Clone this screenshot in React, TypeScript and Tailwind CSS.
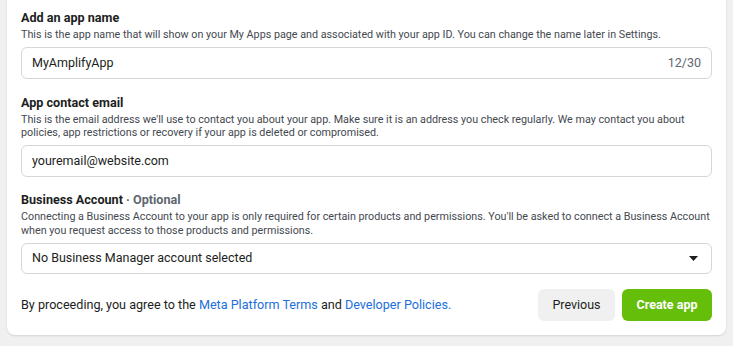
import { useState } from "react";

function FieldLabel({ title, optional }: { title: string; optional?: boolean }) {
  return (
    <div className="text-[12.6px] leading-[16px] font-bold text-[#1c1e21]">
      {title}
      {optional && <span className="text-[#606770]"> · Optional</span>}
    </div>
  );
}

export default function App() {
  const [appName, setAppName] = useState("MyAmplifyApp");
  const [email, setEmail] = useState("youremail@website.com");

  return (
    <div
      className="min-h-[346px] bg-[#f0f0f0] px-[7px] pb-[11px]"
      style={{ fontFamily: "Roboto, 'Liberation Sans', sans-serif" }}
    >
      <div className="bg-white rounded-b-[8px] shadow-[0_1px_2px_rgba(0,0,0,0.12)] px-[14px] pt-[10px] pb-[14px]">
        {/* App name */}
        <FieldLabel title="Add an app name" />
        <p className="mt-[2px] text-[10.75px] leading-[13px] text-[#444950]">
          This is the app name that will show on your My Apps page and associated with your app ID. You can change the name later in Settings.
        </p>
        <div className="mt-[6px] flex items-center h-[32px] border border-[#d3d6da] rounded-[6px] px-[10px]">
          <input
            value={appName}
            maxLength={30}
            onChange={(e) => setAppName(e.target.value)}
            className="flex-1 outline-none text-[12.5px] text-[#1c1e21] bg-transparent"
          />
          <span className="text-[12.5px] text-[#606770]">{appName.length}/30</span>
        </div>

        {/* Contact email */}
        <div className="mt-[16px]">
          <FieldLabel title="App contact email" />
        </div>
        <p className="mt-[2px] text-[10.75px] leading-[13px] text-[#444950]">
          This is the email address we'll use to contact you about your app. Make sure it is an address you check regularly. We may contact you about policies, app restrictions or recovery if your app is deleted or compromised.
        </p>
        <div className="mt-[6px] flex items-center h-[32px] border border-[#d3d6da] rounded-[6px] px-[10px]">
          <input
            value={email}
            onChange={(e) => setEmail(e.target.value)}
            className="flex-1 outline-none text-[12.5px] text-[#1c1e21] bg-transparent"
          />
        </div>

        {/* Business account */}
        <div className="mt-[15px]">
          <FieldLabel title="Business Account" optional />
        </div>
        <p className="mt-[2px] text-[10.75px] leading-[14px] text-[#444950]">
          Connecting a Business Account to your app is only required for certain products and permissions. You'll be asked to connect a Business Account when you request access to those products and permissions.
        </p>
        <button className="mt-[5px] w-full flex items-center justify-between h-[31px] border border-[#d3d6da] rounded-[6px] pl-[10px] pr-[13px] text-left">
          <span className="text-[12.5px] text-[#1c1e21]">No Business Manager account selected</span>
          <svg width="9" height="5" viewBox="0 0 9 5">
            <path d="M0 0h9L4.5 5z" fill="#1c1e21" />
          </svg>
        </button>

        {/* Footer */}
        <div className="mt-[15px] flex items-center justify-between">
          <p className="text-[12.6px] text-[#1c1e21]">
            By proceeding, you agree to the{" "}
            <a href="#" className="text-[#216fdb]">Meta Platform Terms</a> and{" "}
            <a href="#" className="text-[#216fdb]">Developer Policies.</a>
          </p>
          <div className="flex gap-[7px]">
            <button className="h-[32px] w-[77px] rounded-[6px] bg-[#f0f0f0] text-[12.5px] text-[#1c1e21]">
              Previous
            </button>
            <button className="h-[32px] w-[90px] rounded-[6px] bg-[#65be0a] text-[12.5px] font-bold text-white">
              Create app
            </button>
          </div>
        </div>
      </div>
    </div>
  );
}
